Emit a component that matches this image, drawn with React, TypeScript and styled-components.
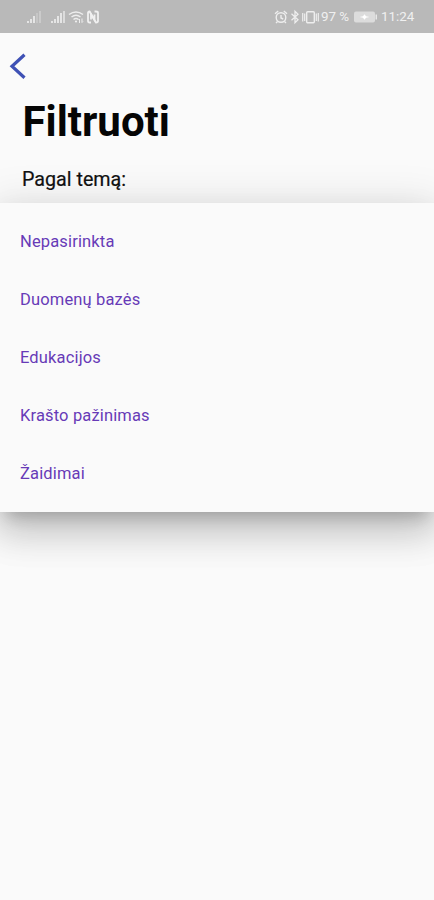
import React from 'react';
import styled, { createGlobalStyle } from 'styled-components';

const GlobalStyle = createGlobalStyle`
  * { box-sizing: border-box; }
  body { margin: 0; background: #fafafa; font-family: Roboto, sans-serif; }
`;

const Screen = styled.div`
  height: 900px;
  overflow: hidden;
  background: #fafafa;
`;

const StatusBar = styled.header`
  height: 33px;
  padding: 1px 18px 0 27px;
  display: flex;
  align-items: center;
  justify-content: space-between;
  background: #b9b9b9;
  color: #f0f0f0;
  font-size: 13.4px;
`;

const StatusGroup = styled.div<{ $gap: number }>`
  display: flex;
  align-items: center;
  gap: ${p => p.$gap}px;
  svg { display: block; flex: none; }
`;

const StatusText = styled.span<{ $width: number }>`
  width: ${p => p.$width}px;
  white-space: nowrap;
  line-height: 16px;
`;

const BackButton = styled.button`
  display: block;
  width: 44px;
  height: 54px;
  padding: 13px 0 0 9px;
  border: 0;
  background: none;
  svg { display: block; }
`;

const Title = styled.h1`
  margin: 11px 0 0 22.5px;
  font-size: 42px;
  line-height: 48px;
  font-weight: 700;
  color: #050505;
`;

const Label = styled.h2`
  margin: 22px 0 0 22px;
  height: 35px;
  font-size: 19.7px;
  line-height: 24px;
  font-weight: 400;
  color: #111;
  -webkit-text-stroke: 0.2px #111;
`;

const Menu = styled.ul`
  position: relative;
  margin: 0;
  padding: 10px 0;
  list-style: none;
  background: #fafafa;
  box-shadow:
    0 11px 15px -7px rgba(0, 0, 0, 0.2),
    0 20px 34px 2px rgba(0, 0, 0, 0.14),
    0 9px 42px 7px rgba(0, 0, 0, 0.12);
`;

const Option = styled.li`
  height: 57.8px;
  padding-left: 20px;
  display: flex;
  align-items: center;
  font-size: 16.5px;
  letter-spacing: 0.15px;
  color: #673ab7;
`;

const Signal = ({ weak = false }: { weak?: boolean }) => (
  <svg width="15" height="14" viewBox="0 0 15 14" fill="#e5e5e5">
    <path d="M0 11h2v2H0zM3 9h2v4H3zM6 6h2v7H6z" />
    <path d="M9 3h2v10H9z" opacity={weak ? 0.3 : 1} />
    <path d="M12 1h2v12h-2z" opacity={weak ? 0.4 : 0.8} />
  </svg>
);

const Wifi = () => (
  <svg width="17" height="16" viewBox="0 0 17 16" fill="none" stroke="#eee" strokeWidth="1.5">
    <path d="M1 5.500q7-5 14 0M3.500 8q4.500-3.500 9 0M5.500 10.500q2.500-2 5 0" />
    <circle cx="8" cy="12.500" r="1.100" fill="#eee" stroke="none" />
    <path d="M11.500 14v-4M14 9.500v4M10.500 11l1-1M15 12.500l-1 1" strokeWidth="1" />
  </svg>
);

const Nfc = () => (
  <svg width="14" height="16" viewBox="0 0 14 16" fill="none" stroke="#f0f0f0" strokeWidth="1.800">
    <path d="M5 13.500H3.500Q2 13.500 2 12V4q0-1.500 1.500-1.500L8.500 11V5.500" />
    <path d="M8.500 2.500h1.500Q12 2.500 12 4v8q0 1.500-2 1.500L5 5v5.500" />
  </svg>
);

const AlarmIcon = () => (
  <svg width="14" height="16" viewBox="0 0 14 16" fill="none" stroke="#eee" strokeWidth="1.400">
    <circle cx="7" cy="8.500" r="4.800" />
    <path d="M7 6v3l2.200 1M1 4.800L4.200 2M9.800 2L13 4.800M3.500 12.500L2 14M10.500 12.500L12 14" />
  </svg>
);

const BluetoothIcon = () => (
  <svg width="10" height="16" viewBox="0 0 10 16" fill="none" stroke="#eee" strokeWidth="1.300">
    <path d="M1.500 4.800l6.500 6L5 13.800V2.200l3 3-6.500 6" />
  </svg>
);

const VibrateIcon = () => (
  <svg width="17" height="16" viewBox="0 0 17 16" fill="none" stroke="#eee" strokeWidth="1.400">
    <rect x="4.700" y="2.700" width="7.600" height="11" rx="1" />
    <path d="M2.700 4.500v7.500M14.300 4.500v7.500M.7 4v8.500M16.300 4v8.500" strokeWidth="1.200" />
  </svg>
);

const BatteryIcon = () => (
  <svg width="24" height="14" viewBox="0 0 24 14">
    <rect x="0" y="1.500" width="21" height="11" rx="2" fill="#dcdcdc" />
    <path d="M21.500 4.500H23v5h-1.500z" fill="#e8e8e8" />
    <path d="M5.500 7l3.500-.8 1.500-2 1.500 2 3.500.8-3.500.8-1.500 2-1.500-2z" fill="#fff" />
  </svg>
);

const options = ['Nepasirinkta', 'Duomenų bazės', 'Edukacijos', 'Krašto pažinimas', 'Žaidimai'];

export default function App() {
  return (
    <Screen>
      <GlobalStyle />
      <StatusBar>
        <StatusGroup $gap={9}>
          <Signal weak />
          <StatusGroup $gap={2}>
            <Signal />
            <StatusGroup $gap={1}>
              <Wifi />
              <Nfc />
            </StatusGroup>
          </StatusGroup>
        </StatusGroup>
        <StatusGroup $gap={3}>
          <StatusGroup $gap={2}>
            <AlarmIcon />
            <BluetoothIcon />
            <VibrateIcon />
            <StatusText $width={30}>97 %</StatusText>
          </StatusGroup>
          <BatteryIcon />
          <StatusText $width={35}>11:24</StatusText>
        </StatusGroup>
      </StatusBar>
      <BackButton aria-label="Atgal">
        <svg width="18" height="28" viewBox="0 0 18 28" fill="none" stroke="#3f51b5" strokeWidth="3.200">
          <path d="M15.500 1.700L3 13.200l12.500 11.500" />
        </svg>
      </BackButton>
      <Title>Filtruoti</Title>
      <Label>Pagal temą:</Label>
      <Menu>
        {options.map(option => <Option key={option}>{option}</Option>)}
      </Menu>
    </Screen>
  );
}
